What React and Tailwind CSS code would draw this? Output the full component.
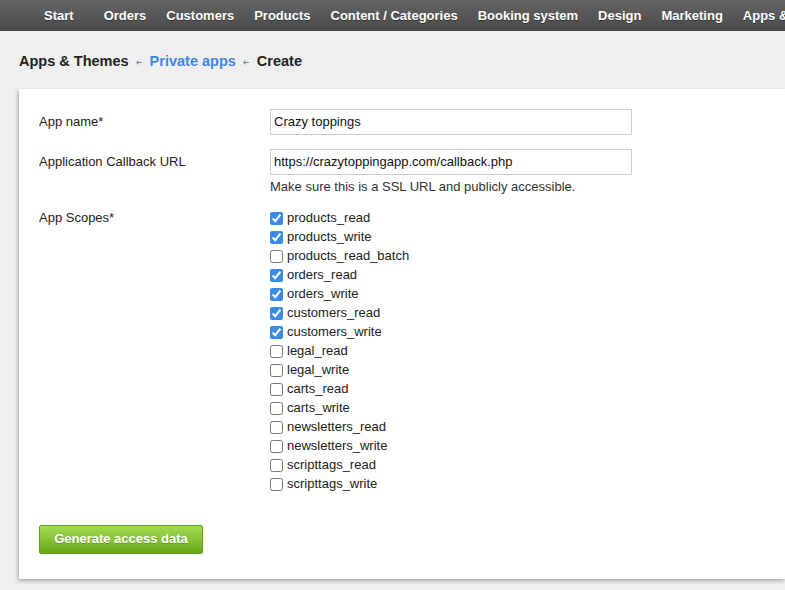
const NAV_ITEMS = [
  "Orders",
  "Customers",
  "Products",
  "Content / Categories",
  "Booking system",
  "Design",
  "Marketing",
  "Apps & Themes"
];

const SCOPES = [
  ["products_read", true],
  ["products_write", true],
  ["products_read_batch", false],
  ["orders_read", true],
  ["orders_write", true],
  ["customers_read", true],
  ["customers_write", true],
  ["legal_read", false],
  ["legal_write", false],
  ["carts_read", false],
  ["carts_write", false],
  ["newsletters_read", false],
  ["newsletters_write", false],
  ["scripttags_read", false],
  ["scripttags_write", false]
];

function Arrow() {
  return (
    <svg width="6" height="5" viewBox="0 0 6 5" className="ml-[7px] mr-[8px]">
      <path d="M0 2.5 L2.5 0 L2.5 2 L6 2 L6 3 L2.5 3 L2.5 5 Z" fill="#7593b8" />
    </svg>
  );
}

export default function App() {
  return (
    <div className="min-h-[590px] overflow-hidden bg-[#efefef] font-['Liberation_Sans',Arial,sans-serif] text-[13px] text-[#222]">
      <div className="flex h-[31px] items-center overflow-hidden whitespace-nowrap bg-gradient-to-b from-[#646464] to-[#4a4a4a] pl-[44px] text-[13px] font-bold text-white [text-shadow:0_1px_0_rgba(0,0,0,0.4)]">
        <span className="mr-[30px]">Start</span>
        <div className="flex gap-[20px]">
          {NAV_ITEMS.map((item) => (
            <span key={item}>{item}</span>
          ))}
        </div>
      </div>

      <div className="mt-[21px] flex h-[20px] items-center pl-[19px] text-[14.5px] font-bold">
        <span className="text-[#222]">Apps &amp; Themes</span>
        <Arrow />
        <span className="text-[#3e86e6]">Private apps</span>
        <Arrow />
        <span className="text-[#222]">Create</span>
      </div>

      <div className="ml-[19px] mt-[17px] h-[490px] bg-white px-[20px] pt-[20px] shadow-[-1px_2px_4px_rgba(0,0,0,0.3)]">
        <div className="flex items-center">
          <div className="w-[231px]">App name*</div>
          <div className="flex h-[26px] w-[362px] items-center border border-[#cccccc] pl-[3px] text-[#111]">Crazy toppings</div>
        </div>

        <div className="mt-[14px] flex">
          <div className="flex h-[26px] w-[231px] items-center">Application Callback URL</div>
          <div>
            <div className="flex h-[26px] w-[362px] items-center border border-[#cccccc] pl-[3px] text-[#111]">
              https://crazytoppingapp.com/callback.php
            </div>
            <div className="mt-[2px] text-[#333]">Make sure this is a SSL URL and publicly accessible.</div>
          </div>
        </div>

        <div className="mt-[12px] flex">
          <div className="flex h-[19px] w-[231px] items-center">App Scopes*</div>
          <div className="flex flex-col">
            {SCOPES.map(([name, checked]) => (
              <label key={name} className="flex h-[19px] items-center gap-[4px] text-[#222]">
                <input type="checkbox" defaultChecked={checked} className="m-0 h-[13px] w-[13px] accent-[#3a8ae8]" />
                <span>{name}</span>
              </label>
            ))}
          </div>
        </div>

        <button className="mt-[31px] h-[29px] w-[164px] rounded-[2px] border border-[#6a9f1c] bg-gradient-to-b from-[#a3dc52] to-[#6aa817] text-[13px] font-bold text-white [text-shadow:0_1px_0_rgba(0,0,0,0.2)]">
          Generate access data
        </button>
      </div>
    </div>
  );
}
